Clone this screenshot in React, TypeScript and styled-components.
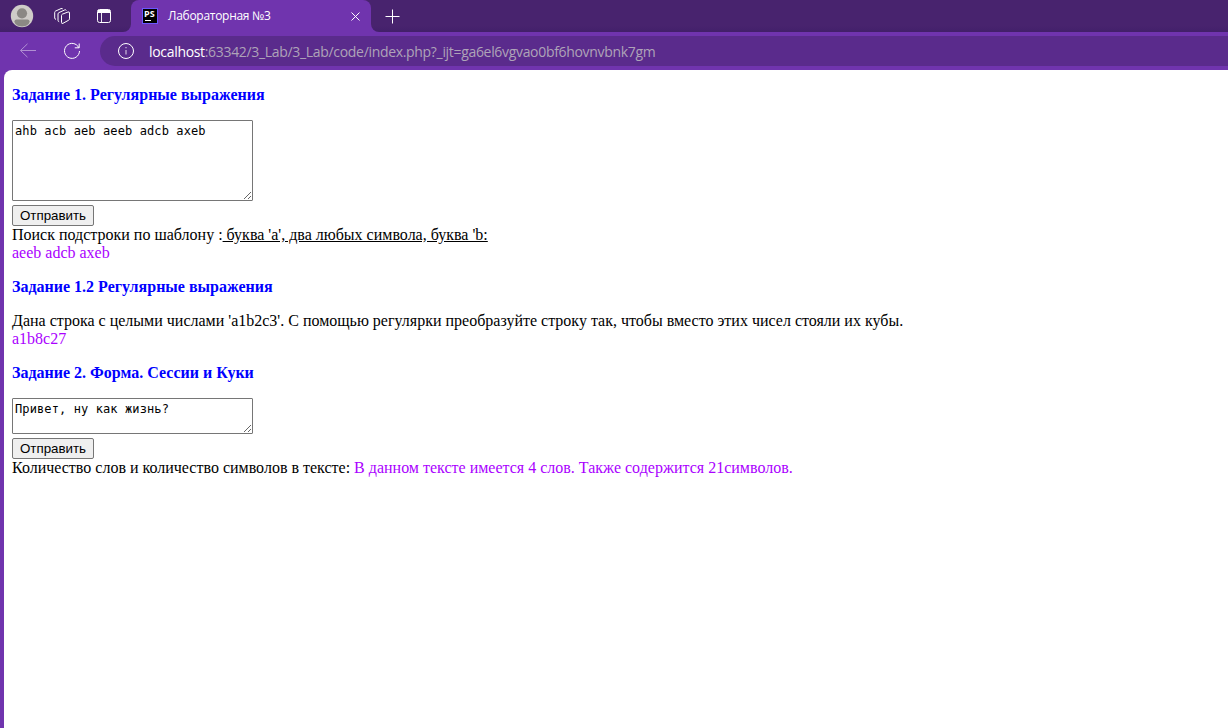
import React from "react";
import styled, { createGlobalStyle } from "styled-components";

const GlobalStyle = createGlobalStyle`
  * { box-sizing: border-box; }
  body { margin: 0; background: #7034ae; overflow: hidden; }
`;

const Window = styled.div`
  display: flex;
  flex-direction: column;
  width: 1228px;
  height: 728px;
  background: #7034ae;
`;

const TabStrip = styled.div`
  display: flex;
  flex: none;
  height: 32px;
`;

const StripStart = styled.div`
  display: flex;
  align-items: center;
  width: 131px;
  padding-left: 10px;
  background: linear-gradient(#48236e 26px, #42206a);
  border-bottom-right-radius: 8px;
`;

const StripEnd = styled.div`
  flex: 1;
  display: flex;
  align-items: center;
  padding-left: 14px;
  background: linear-gradient(#48236e 26px, #42206a);
  border-bottom-left-radius: 8px;
`;

const TabHolder = styled.div`
  width: 240px;
  background: #48236e;
`;

const Tab = styled.div`
  display: flex;
  align-items: center;
  height: 32px;
  padding: 0 11px 0 11px;
  background: #7034ae;
  border-radius: 8px 8px 0 0;
`;

const TabTitle = styled.span`
  flex: 1;
  margin-left: 10px;
  color: #fff;
  font: 12px/16px "Open Sans", "Noto Sans", sans-serif;
  letter-spacing: -0.28px;
  white-space: nowrap;
`;

const Icon = styled.svg<{ $gap?: number }>`
  display: block;
  flex: none;
  margin-left: ${(p) => p.$gap ?? 0}px;
  fill: none;
  stroke: #fff;
`;

const Favicon = styled.div`
  display: flex;
  flex-direction: column;
  flex: none;
  width: 16px;
  height: 16px;
  padding: 0 0 0 1px;
  border: 1px solid #6b57ff;
  background: #000;
  color: #fff;
  font: bold 9px/10px "Open Sans", sans-serif;

  &::after {
    content: "";
    width: 6px;
    height: 1px;
    margin: 1px 0 0 1px;
    background: #fff;
  }
`;

const Toolbar = styled.div`
  display: flex;
  align-items: center;
  flex: none;
  height: 38px;
  padding-left: 19px;
`;

const AddressBar = styled.div`
  display: flex;
  align-items: center;
  flex: 1;
  height: 30px;
  margin-left: 19px;
  padding-left: 17px;
  border-radius: 15px 0 0 15px;
  background: #5a2b8c;
`;

const Url = styled.span`
  margin-left: 14px;
  padding-top: 1px;
  color: #aea3b8;
  font: 14px/20px "Open Sans", "Noto Sans", sans-serif;
  letter-spacing: -0.32px;
  white-space: nowrap;
`;

const Host = styled.span`
  color: #fff;
`;

const Page = styled.main`
  flex: 1;
  margin-left: 4px;
  padding: 16px 8px;
  background: #fff;
  border-top-left-radius: 8px;
  color: #000;
  font: 16px/18px "Liberation Serif", "Times New Roman", serif;
`;

const Heading = styled.h1`
  margin: 0 0 16px;
  color: #00f;
  font-size: 16px;
  font-weight: bold;
  line-height: 18px;
`;

const Task = styled.section`
  margin-bottom: 16px;
`;

const Field = styled.textarea<{ $height: number }>`
  display: block;
  width: 241px;
  height: ${(p) => p.$height}px;
  margin: 0 0 4px;
  padding: 3px 2px 2px;
  border: 1px solid #767676;
  border-radius: 1px;
  color: #000;
  font: 12px/15px "DejaVu Sans Mono", monospace;
  letter-spacing: 0.11px;
  overflow: hidden;
`;

const Submit = styled.button`
  display: block;
  width: 82px;
  height: 21px;
  padding: 0;
  border: 1px solid #767676;
  border-radius: 2px;
  background: #efefef;
  color: #000;
  font: 13.333px/15px "Liberation Sans", Arial, sans-serif;
`;

const Line = styled.div`
  height: 18px;
  white-space: nowrap;
`;

const Result = styled.span`
  color: #a0f;
`;

export default function App() {
  return (
    <Window>
      <GlobalStyle />
      <TabStrip>
        <StripStart>
          <Icon width="24" height="24" viewBox="0 0 24 24">
            <circle cx="12" cy="12" r="11.2" fill="#cfccc8" stroke="none" />
            <g fill="#8b8884" stroke="none">
              <circle cx="12" cy="9.3" r="5.1" />
              <path d="M4.5 17.3Q4.5 15.5 6.5 15.5H17.5Q19.5 15.5 19.5 17.3C19.5 20.5 16 22.5 12 22.5S4.5 20.5 4.5 17.3Z" />
            </g>
          </Icon>
          <Icon $gap={20} width="17" height="18" viewBox="0 0 17 18" strokeWidth="1" strokeLinejoin="round">
            <path d="M7.5 8.6Q7.5 7.6 8.3 7.2L14 5Q15.5 4.5 15.5 5.9V11.8Q15.5 12.7 14.8 13.1L9 16.3Q7.5 17 7.5 15.5Z" />
            <path d="M5.2 14.8Q4 14.5 4 13.3V7Q4 6 4.9 5.6L10.8 2.9Q12 2.5 12.4 3.4" />
            <path d="M2 12.4Q.7 12.1.7 11V5.4Q.7 4.5 1.5 4.1L7 1.6Q8.3 1.2 8.8 2" />
          </Icon>
          <Icon $gap={26} width="14" height="14" viewBox="0 0 14 14">
            <rect x=".5" y=".5" width="13" height="13" rx="2" />
            <path d="M1 1H13V4H1Z" fill="#fff" stroke="none" />
            <path d="M4.5 4V13" strokeWidth=".9" />
          </Icon>
        </StripStart>
        <TabHolder>
          <Tab>
            <Favicon>PS</Favicon>
            <TabTitle>Лабораторная №3</TabTitle>
            <Icon width="9" height="10" viewBox="0 0 9 10" strokeWidth="1">
              <path d="M.5 1.5L8.5 9.5M8.5 1.5L.5 9.5" />
            </Icon>
          </Tab>
        </TabHolder>
        <StripEnd>
          <Icon width="15" height="15" viewBox="0 0 15 15" strokeWidth="1">
            <path d="M7.5.5V14.5M.5 7.5H14.5" />
          </Icon>
        </StripEnd>
      </TabStrip>
      <Toolbar>
        <Icon width="18" height="16" viewBox="0 0 18 16" strokeWidth="1" opacity=".45">
          <path d="M17 7.5H1.5M8.5.8L1.5 7.5L8.5 14.2" />
        </Icon>
        <Icon $gap={26} width="18" height="18" viewBox="0 0 18 18" strokeWidth="1">
          <path d="M15.8 5.7A7.5 7.5 0 1 0 16.5 9M16.2 1.5V5.8H11.8" />
        </Icon>
        <AddressBar>
          <Icon width="18" height="18" viewBox="0 0 18 18" strokeWidth="1">
            <circle cx="9" cy="9" r="7.5" />
            <path d="M9 8V12.5M9 5V6.3" strokeWidth="1.1" opacity=".75" />
          </Icon>
          <Url><Host>localhost</Host>:63342/3_Lab/3_Lab/code/index.php?_ijt=ga6el6vgvao0bf6hovnvbnk7gm</Url>
        </AddressBar>
      </Toolbar>
      <Page>
        <Task>
          <Heading>Задание 1. Регулярные выражения</Heading>
          <Field $height={81} spellCheck={false} defaultValue="ahb acb aeb aeeb adcb axeb" />
          <Submit>Отправить</Submit>
          <Line>Поиск подстроки по шаблону :<u> буква 'a', два любых символа, буква 'b:</u></Line>
          <Line><Result>aeeb adcb axeb</Result></Line>
        </Task>
        <Task>
          <Heading>Задание 1.2 Регулярные выражения</Heading>
          <Line>Дана строка с целыми числами 'a1b2c3'. С помощью регулярки преобразуйте строку так, чтобы вместо этих чисел стояли их кубы.</Line>
          <Line><Result>a1b8c27</Result></Line>
        </Task>
        <Task>
          <Heading>Задание 2. Форма. Сессии и Куки</Heading>
          <Field $height={36} spellCheck={false} defaultValue="Привет, ну как жизнь?" />
          <Submit>Отправить</Submit>
          <Line>Количество слов и количество символов в тексте: <Result>В данном тексте имеется 4 слов. Также содержится 21символов.</Result></Line>
        </Task>
      </Page>
    </Window>
  );
}
